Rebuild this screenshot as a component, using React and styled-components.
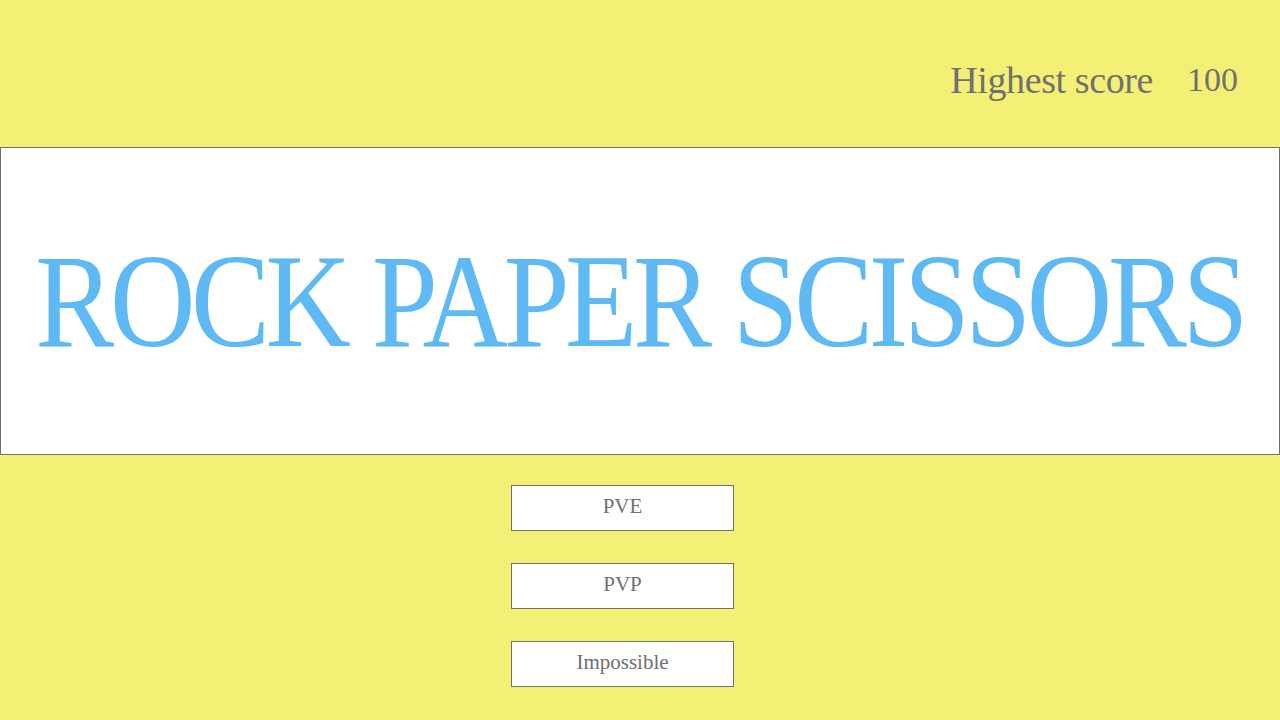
import React from 'react';
import styled, { createGlobalStyle } from 'styled-components';

const GlobalStyle = createGlobalStyle`
  html, body {
    margin: 0;
    padding: 0;
    background: #f4f076;
  }
  body {
    font-family: "Liberation Serif", "DejaVu Serif", serif;
  }
`;

const Page = styled.div`
  display: flex;
  flex-direction: column;
  width: 1280px;
  height: 720px;
  overflow: hidden;
  background: #f4f076;
`;

const Header = styled.header`
  display: flex;
  justify-content: flex-end;
  align-items: center;
  height: 147px;
  padding: 12px 42px 0 0;
  box-sizing: border-box;
  color: #707070;
  font-size: 38px;
`;

const ScoreLabel = styled.span`
  margin-right: 34px;
  letter-spacing: -0.4px;
`;

const ScoreValue = styled.span`
  font-size: 34px;
`;

const Banner = styled.div`
  display: flex;
  justify-content: center;
  align-items: center;
  height: 308px;
  box-sizing: border-box;
  background: #fff;
  border: 1px solid #707070;
`;

const Title = styled.h1`
  margin: 0;
  font-size: 134px;
  font-weight: 400;
  color: #5fb9f4;
  letter-spacing: -5px;
  transform: scaleX(0.884);
  white-space: nowrap;
`;

const Menu = styled.nav`
  display: flex;
  flex-direction: column;
  align-items: center;
  gap: 32px;
  padding-top: 30px;
  padding-right: 35px;
`;

const MenuButton = styled.button`
  width: 223px;
  height: 46px;
  padding: 0 0 4px;
  background: #fff;
  border: 1px solid #707070;
  color: #707070;
  font-family: "Liberation Serif", "DejaVu Serif", serif;
  font-size: 21px;
  cursor: pointer;
`;

const modes = ['PVE', 'PVP', 'Impossible'];

const App = () => (
  <Page>
    <GlobalStyle />
    <Header>
      <ScoreLabel>Highest score</ScoreLabel>
      <ScoreValue>100</ScoreValue>
    </Header>
    <Banner>
      <Title>ROCK PAPER SCISSORS</Title>
    </Banner>
    <Menu>
      {modes.map(m => (
        <MenuButton key={m}>{m}</MenuButton>
      ))}
    </Menu>
  </Page>
);

export default App;
